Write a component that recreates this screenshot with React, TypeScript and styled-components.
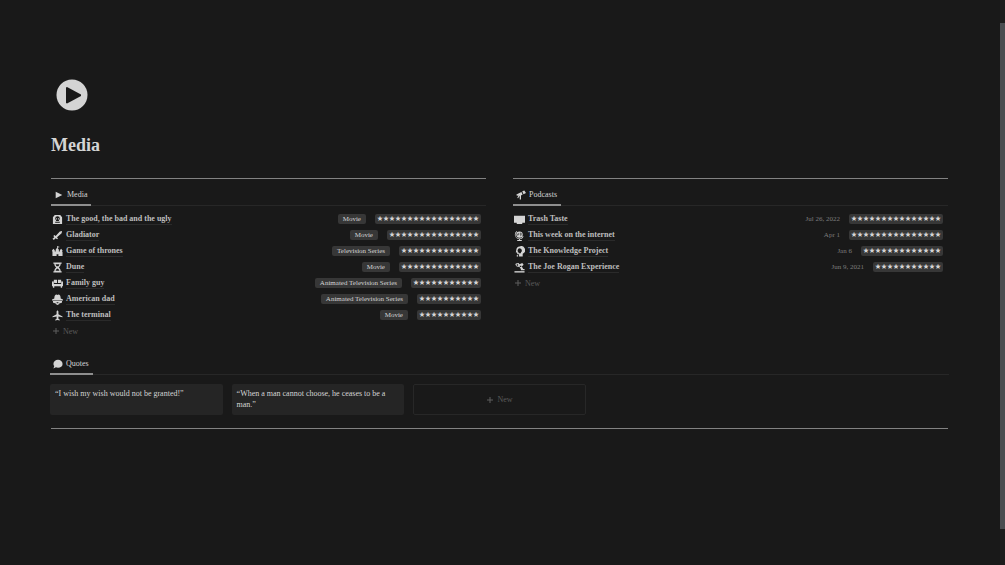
import React from 'react';
import styled, { createGlobalStyle } from 'styled-components';

const GlobalStyle = createGlobalStyle`
  *, *::before, *::after { box-sizing: border-box; }
  body {
    margin: 0;
    background: #191919;
    color: #d4d4d4;
    font-family: "Liberation Serif", "Times New Roman", serif;
    font-size: 8px;
    line-height: 11px;
  }
  button { font: inherit; color: inherit; background: none; border: 0; padding: 0; cursor: pointer; }
  a { color: inherit; text-decoration: none; }
`;

const Page = styled.main`
  min-height: 100vh;
  padding: 79px 57px 60px 51px;
`;

const PageIcon = styled.svg`
  display: block;
  width: 32px;
  height: 32px;
  margin-left: 5px;
`;

const Title = styled.h1`
  margin: 23px 0 21px;
  font-size: 18px;
  line-height: 23px;
  font-weight: 700;
`;

const Divider = styled.hr`
  height: 1px;
  margin: 0;
  border: 0;
  background: #828282;
`;

const Columns = styled.div`
  display: grid;
  grid-template-columns: 1fr 1fr;
  gap: 27px;
`;

const TabBar = styled.div`
  display: flex;
  height: 27px;
  border-bottom: 1px solid #272727;
`;

const Tab = styled.button`
  display: flex;
  align-items: center;
  gap: 3px;
  height: 27px;
  padding: 8px 4px 2px 3px;
  border-bottom: 2px solid #8e8e8e;
`;

const Glyph = styled.svg`
  flex: none;
  width: 10px;
  height: 10px;
  fill: #d4d4d4;
`;

const List = styled.ul`
  margin: 0;
  padding: 5px 5px 0 1px;
  list-style: none;
`;

const Row = styled.li`
  display: flex;
  align-items: center;
  gap: 3px;
  height: 16px;

  ${Glyph} {
    width: 11px;
    height: 11px;
  }
`;

const RowTitle = styled.a`
  margin-right: auto;
  border-bottom: 1px solid #2a2a2a;
  font-weight: 700;
  color: #bebebe;
`;

const Tag = styled.span`
  height: 10px;
  padding: 0 5px;
  border-radius: 2px;
  background: #373737;
  font-size: 7px;
  line-height: 10px;
`;

const Stars = styled.span`
  height: 10px;
  margin-left: 6px;
  padding: 0 2px;
  border-radius: 2px;
  background: #373737;
  font: 6px/8px "Noto Sans CJK JP", sans-serif;
`;

const DateText = styled.time`
  color: #7d7d7d;
  font-size: 7px;
`;

const NewButton = styled.button`
  display: flex;
  align-items: center;
  gap: 3px;
  height: 16px;
  color: #5a5a5a;
`;

const PlusIcon = styled.svg`
  width: 8px;
  height: 8px;
  fill: none;
  stroke: #5f5f5f;
`;

const Quotes = styled.section`
  margin: 9px -1px 13px;
`;

const Cards = styled.div`
  display: grid;
  grid-template-columns: repeat(auto-fill, minmax(160px, 1fr));
  gap: 9px;
  padding-top: 9px;
`;

const Card = styled.article`
  min-height: 31px;
  padding: 4px 5px;
  border-radius: 2px;
  background: #252525;
`;

const NewCard = styled.button`
  display: flex;
  align-items: center;
  justify-content: center;
  gap: 3px;
  min-height: 31px;
  border: 1px solid #272727;
  border-radius: 2px;
  color: #5a5a5a;
`;

const ScrollTrack = styled.div`
  position: fixed;
  inset: 0 0 0 auto;
  width: 5px;
  padding: 23px 0 36px;
  background: #1d1d1d;
`;

const ScrollThumb = styled.div`
  height: 100%;
  background: #4a4d50;
`;

const shapes: Record<string, React.ReactNode> = {
  play: <path d="M4 4v16l16-8z" />,
  poster: (
    <>
      <path fillRule="evenodd" d="M2 22V7l4-5h12l4 5v15zM12 5a5 5 0 0 0-5 5c0 3 2 3 2 5h6c0-2 2-2 2-5a5 5 0 0 0-5-5zM7 17v2h10v-2z" />
      <path d="M9 9h2v3H9zM13 9h2v3h-2z" />
    </>
  ),
  sword: <path d="M22 2l-1 5-10 9 2 3-2 1-3-2-4 4-3-3 4-3-2-3 2-2 3 2 9-10z" />,
  castle: <path fillRule="evenodd" d="M11 0l6 2-5 2 3 4v4h2V9l3-3 3 4-1 3h1v9H1v-9l-1-3 3-4 3 3v3h2V8l3-4zM10 22h4v-4h-4z" />,
  hourglass: <path fillRule="evenodd" d="M3 1h18v3h-2c0 4-2 6-4 8 2 2 4 4 4 8h2v3H3v-3h2c0-4 2-6 4-8-2-2-4-4-4-8H3zM8 5c0 2 1 3 2 4h4c1-1 2-2 2-4zM12 14c-2 1-4 3-4 5h8c0-2-2-4-4-5z" />,
  couch: <path d="M4 4h7v7H5L4 8zM13 4h7v4l-1 3h-6zM0 9a2 2 0 0 1 4 0v4h16V9a2 2 0 0 1 4 0v9h-2v3h-3v-3H5v3H2v-3H0z" />,
  agent: (
    <>
      <path d="M5 10c0-6 2-9 5-9l2 1 2-1c3 0 5 3 5 9l5 2v2H0v-2z" />
      <path fillRule="evenodd" d="M2 15h20c0 3-1 5-3 5l-2-1-1 3-4 2-4-2-1-3-2 1c-2 0-3-2-3-5zM10 18v2h4v-2z" />
    </>
  ),
  plane: <path d="M23 16v-2l-9-5V3.500c0-1-1-2.500-2-2.500s-2 1.500-2 2.500V9l-9 5v2l9-2v5l-3 2v2l5-1 5 1v-2l-3-2v-5z" />,
  telescope: <path d="M1 11l12-6 3 6-4 2 0 10h-3v-9l-4 6-2-1 3-6-4 1zM15 3l5-2 4 6-6 3z" />,
  monitor: <path d="M0 4h24v15h-6v3H6v-3H0z" />,
  globe: (
    <>
      <circle cx="12" cy="10" r="7" />
      <path d="M6 2A10 10 0 0 0 11 20v2H7v2h10v-2h-4v-2a10 10 0 0 0 8-6l-2-1a8 8 0 1 1-12-9z" />
      <path d="M6 9l5-3 1 3-4 4zM13 5l4 2v4l-3 3-1-4z" fill="#6d6d6d" />
    </>
  ),
  head: (
    <>
      <path fillRule="evenodd" d="M12 1a8 8 0 0 0-7 7l-1 6h3v4h4v5h8v-6a8 8 0 0 0-7-16zM12 5a5 5 0 0 1 3 9v2h-5v-2a5 5 0 0 1 2-9z" />
      <path d="M6 20h3v3H6z" />
    </>
  ),
  microphone: (
    <>
      <path d="M4 3l6-1 2 3 6-3 3 4-4 4 3 5h3v3h-8v-3l-3-4-6-1-3-4z" />
      <path d="M1 20h22v3H1z" />
      <path d="M6 5h3v3H6zM12 8h4v3h-3z" fill="#191919" />
    </>
  ),
  bubble: <path d="M12 2c6 0 11 4 11 10s-5 9-11 9c-2 0-3 0-5-1l-6 3 2-6c-1-1-2-3-2-5C1 6 6 2 12 2z" />,
};

const Icon = ({ name }: { name: string }) => (
  <Glyph viewBox="0 0 24 24" aria-hidden="true">{shapes[name]}</Glyph>
);

const Plus = () => (
  <PlusIcon viewBox="0 0 8 8" aria-hidden="true"><path d="M4 1v6M1 4h6" /></PlusIcon>
);

const media = [
  { icon: 'poster', title: 'The good, the bad and the ugly', kind: 'Movie', stars: 17 },
  { icon: 'sword', title: 'Gladiator', kind: 'Movie', stars: 15 },
  { icon: 'castle', title: 'Game of thrones', kind: 'Television Series', stars: 13 },
  { icon: 'hourglass', title: 'Dune', kind: 'Movie', stars: 13 },
  { icon: 'couch', title: 'Family guy', kind: 'Animated Television Series', stars: 11 },
  { icon: 'agent', title: 'American dad', kind: 'Animated Television Series', stars: 10 },
  { icon: 'plane', title: 'The terminal', kind: 'Movie', stars: 10 },
];

const podcasts = [
  { icon: 'monitor', title: 'Trash Taste', date: 'Jul 26, 2022', stars: 15 },
  { icon: 'globe', title: 'This week on the internet', date: 'Apr 1', stars: 15 },
  { icon: 'head', title: 'The Knowledge Project', date: 'Jan 6', stars: 13 },
  { icon: 'microphone', title: 'The Joe Rogan Experience', date: 'Jun 9, 2021', stars: 11 },
];

const quotes = [
  '“I wish my wish would not be granted!”',
  '“When a man cannot choose, he ceases to be a man.”',
];

const ViewTab = ({ icon, label }: { icon: string; label: string }) => (
  <TabBar role="tablist">
    <Tab type="button" role="tab" aria-selected="true"><Icon name={icon} />{label}</Tab>
  </TabBar>
);

export default function App() {
  return (
    <>
      <GlobalStyle />
      <Page>
        <PageIcon viewBox="0 0 32 32" aria-hidden="true">
          <circle cx="16" cy="16" r="15.500" fill="#d4d4d4" />
          <path d="M10 8.500v15.500l1 .5 14-7.500v-1.500L11 8z" fill="#191919" />
        </PageIcon>
        <Title>Media</Title>
        <Columns>
          <section>
            <Divider />
            <ViewTab icon="play" label="Media" />
            <List>
              {media.map((m) => (
                <Row key={m.title}>
                  <Icon name={m.icon} />
                  <RowTitle href="#">{m.title}</RowTitle>
                  <Tag>{m.kind}</Tag>
                  <Stars>{'★'.repeat(m.stars)}</Stars>
                </Row>
              ))}
              <li><NewButton type="button"><Plus />New</NewButton></li>
            </List>
          </section>
          <section>
            <Divider />
            <ViewTab icon="telescope" label="Podcasts" />
            <List>
              {podcasts.map((p) => (
                <Row key={p.title}>
                  <Icon name={p.icon} />
                  <RowTitle href="#">{p.title}</RowTitle>
                  <DateText>{p.date}</DateText>
                  <Stars>{'★'.repeat(p.stars)}</Stars>
                </Row>
              ))}
              <li><NewButton type="button"><Plus />New</NewButton></li>
            </List>
          </section>
        </Columns>
        <Quotes>
          <ViewTab icon="bubble" label="Quotes" />
          <Cards>
            {quotes.map((q) => <Card key={q}>{q}</Card>)}
            <NewCard type="button"><Plus />New</NewCard>
          </Cards>
        </Quotes>
        <Divider />
      </Page>
      <ScrollTrack aria-hidden="true"><ScrollThumb /></ScrollTrack>
    </>
  );
}
